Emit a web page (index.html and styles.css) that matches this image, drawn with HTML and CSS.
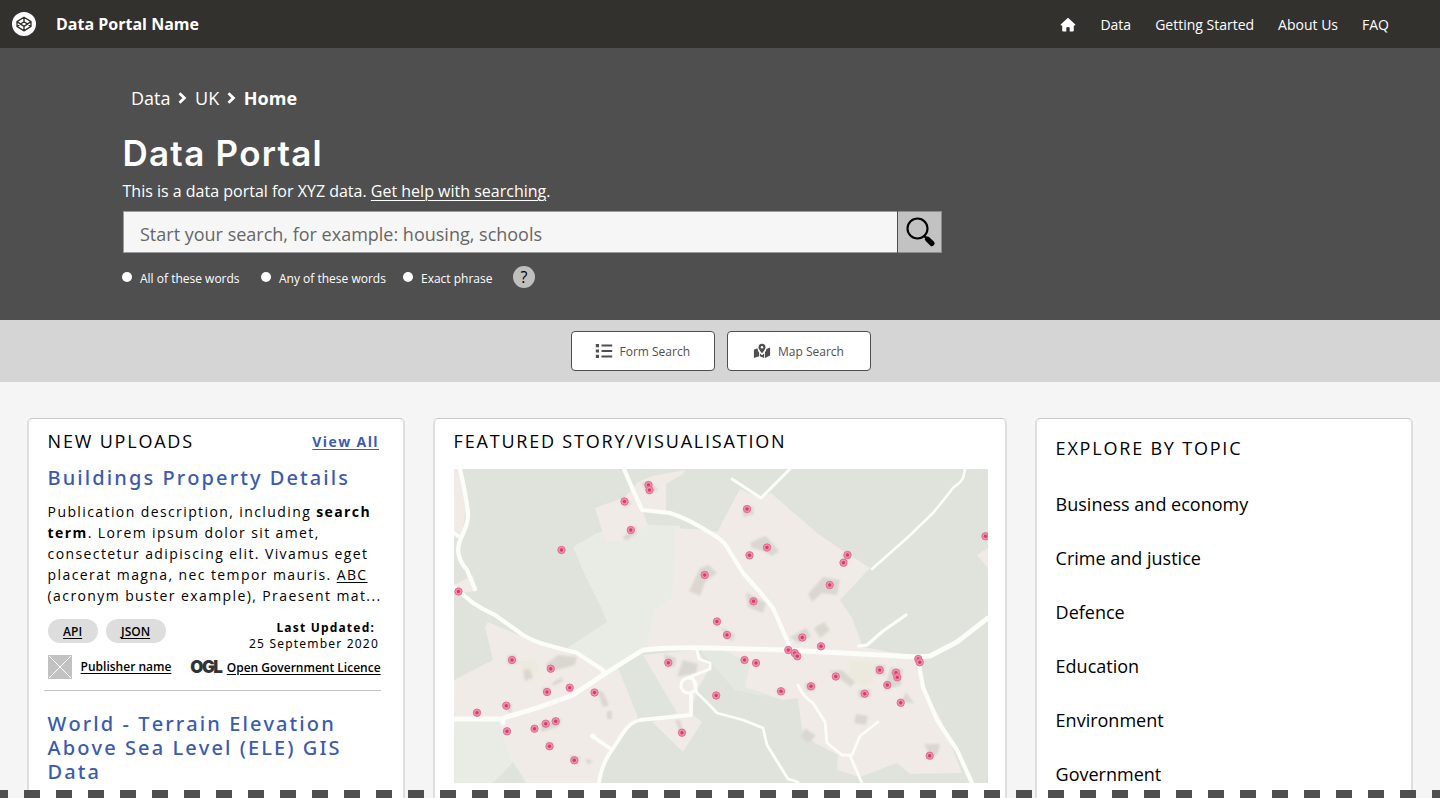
FILE: index.html
```html
<!DOCTYPE html>
<html lang="en">
<head>
<meta charset="utf-8">
<title>Data Portal</title>
<link rel="stylesheet" href="styles.css">
</head>
<body>
<header class="nav">
  <svg class="logo" viewBox="0 0 24 24"><circle cx="12" cy="12" r="12" fill="#fff"/><path d="M12 5.2 19 9.6V14.4L12 18.9 5 14.4V9.6ZM12 5.2V9.7M12 14.4V18.9M5 9.6 12 14.4 19 9.6M5 14.4 12 9.7 19 14.4" fill="none" stroke="#33312e" stroke-width="1.35" stroke-linejoin="round"/></svg>
  <span class="brand">Data Portal Name</span>
  <nav class="links">
    <svg class="home" viewBox="0 0 16 16"><path d="M8 .8 15.3 7.6Q15.5 8.6 14.6 8.6H13.8V13.6Q13.8 14.6 12.8 14.6H9.7V10.7Q9.7 9.9 8 9.9T6.3 10.7V14.6H3.2Q2.2 14.6 2.2 13.6V8.6H1.4Q.5 8.6.7 7.6Z" fill="#fff"/></svg>
    <a class="l1">Data</a><a class="l2">Getting Started</a><a class="l3">About Us</a><a class="l4">FAQ</a>
  </nav>
</header>
<section class="hero">
  <div class="crumbs"><span>Data</span><svg viewBox="0 0 9 12"><path d="M1.5 1.3 6.4 6 1.5 10.7"/></svg><span>UK</span><svg viewBox="0 0 9 12"><path d="M1.5 1.3 6.4 6 1.5 10.7"/></svg><b>Home</b></div>
  <h1>Data Portal</h1>
  <p class="intro">This is a data portal for XYZ data. <a>Get help with searching</a>.</p>
  <div class="search">
    <div class="field">Start your search, for example: housing, schools</div>
    <div class="go"><svg viewBox="0 0 44 41"><circle cx="19.5" cy="16.5" r="10" fill="none" stroke="#000" stroke-width="2.1"/><path d="M26 23.7 29 26.7" stroke="#000" stroke-width="2.4"/><path d="M29.5 27.2 34 31.5" stroke="#000" stroke-width="5.2" stroke-linecap="round"/></svg></div>
  </div>
  <div class="options">
    <i></i><span class="o1">All of these words</span><i></i><span class="o2">Any of these words</span><i></i><span class="o3">Exact phrase</span><span class="help">?</span>
  </div>
</section>
<section class="modes">
  <div class="mode"><svg viewBox="0 0 18 16"><path d="M.8 1h3.2v3.2H.8zM.8 6.4h3.2v3.2H.8zM.8 11.8h3.2V15H.8zM6.5 1.6h10.7v1.9H6.5zM6.5 7.1h10.7V9H6.5zM6.5 12.5h10.7v1.9H6.5z" fill="#4f4f4f"/></svg><span>Form Search</span></div>
  <div class="mode"><svg viewBox="0 0 18 16"><path d="M.9 6.8 4.4 5.2Q4.8 8 6.2 9.8V13.2L.9 15ZM7 10.6 9 12.3 11.2 10.4V15L7 13.3ZM12 9.3Q13.4 7 13.4 5.9L17.1 4.5V12.6L12 15Z" fill="#4f4f4f"/><path d="M9 .7A3.5 3.5 0 0 1 12.5 4.2Q12.4 6.4 9 10.2 5.6 6.4 5.5 4.2A3.5 3.5 0 0 1 9 .7Z" fill="#4f4f4f"/><circle cx="9" cy="4.2" r="1.2" fill="#fff"/></svg><span>Map Search</span></div>
</section>
<main class="cards">
  <section class="card uploads">
    <div class="head"><h2>NEW UPLOADS</h2><a class="all">View All</a></div>
    <h3>Buildings Property Details</h3>
    <p class="desc">Publication description, including <b>search term</b>. Lorem ipsum dolor sit amet, consectetur adipiscing elit. Vivamus eget placerat magna, nec tempor mauris. <a>ABC</a> (acronym buster example), Praesent mat...</p>
    <div class="meta">
      <span class="tag t1">API</span><span class="tag t2">JSON</span>
      <div class="date"><b>Last Updated:</b><span>25 September 2020</span></div>
    </div>
    <div class="source">
      <svg class="thumb" viewBox="0 0 24 24"><path fill="#c2c2c2" d="M0 0h24v24H0z"/><path d="M1 1 23 23M23 1 1 23" stroke="#fff" stroke-width="1"/></svg>
      <a class="pub">Publisher name</a><span class="ogl">OGL</span><a class="lic">Open Government Licence</a>
    </div>
    <h3 class="second">World - Terrain Elevation Above Sea Level (ELE) GIS Data</h3>
  </section>
  <section class="card story">
    <h2>FEATURED STORY/VISUALISATION</h2>
    <svg class="map" viewBox="454 469 534 314">
      <defs>
        <g id="pin"><circle r="3.7" fill="#f08fac" stroke="#e0668c" stroke-width=".9"/><circle r="1.7" fill="#cf3f6d"/></g>
        <filter id="soft" x="-5%" y="-5%" width="110%" height="110%"><feGaussianBlur stdDeviation=".9"/></filter>
      </defs>
      <path fill="#dfe3dc" d="M454 469h534v314H454z"/>
      <g fill="#e8ece5">
        <path d="M573 547 597 533 630 524 680 526 672 648 643 651 605 671 567 648 607 622 600 605 585 575Z"/>
        <path d="M454 718H498L512 757 530 783H454Z"/>
        <path d="M618 668 638 717 677 713 643 655Z" fill="#dfe4dd"/>
        <path d="M700 650 723 650 750 663 745 687 770 697 735 690Z" fill="#e4e8e1"/>
      </g>
      <path fill="#dee3db" d="M493 783 513 762 526 783Z"/>
      <g fill="#f0ebe6">
        <path d="M454 469H460L466 510 462 535 454 530ZM454 585 473 575 476 591 462 593ZM977 555 988 548V568Z"/>
        <path d="M595 508 625 497 638 482 652 476 685 470 683 474 666 484 666 512 643 512 648 525 625 540 606 543Z"/>
        <path d="M675 528 705 530 717 532 740 489 760 498 771 493 817 533 843 551 870 568 840 600 852 618 863 647 917 657 925 693 940 717 962 773 910 774 897 763 860 777 837 770 838 755 815 743 802 730 798 698 782 700 745 687 750 663 723 650 645 649 655 610 672 598Z"/>
        <path d="M488 622 485 627 493 660 454 680V720L498 722 510 757 528 783H598L613 750 638 717 618 668 600 668 580 657 523 637Z"/>
        <path d="M643 655 697 650 710 668 697 690 691 713 702 722 683 752 652 722 677 713Z"/>
      </g>
      <g fill="#ebeadb" opacity=".6" filter="url(#soft)"><path d="M848 660H874V683L862 688 848 677ZM518 662 534 658 539 672 524 680Z"/></g>
      <g fill="#dad7d1" filter="url(#soft)">
        <path d="M700 568 709 565 717 573 705 582 700 596 689 591 693 583ZM742 511 753 506 754 514 744 517ZM760 538 766 536 779 551 772 556 763 551 752 548 750 543ZM823 577 840 580 837 595 822 593 812 602 808 594ZM842 553 850 557 844 566ZM746 592 766 603 763 613 748 607ZM620 495 632 503 625 508ZM641 482 652 483 658 490 648 495ZM622 538 636 525 637 533 627 540Z"/>
        <path d="M814 628 824 622 830 630 820 638ZM790 637 806 628 811 637 798 643ZM545 665 558 655 577 657 575 665 553 671ZM523 670 530 669 533 678 525 681ZM507 656 515 654 518 663 508 665ZM552 683 562 677 563 681 553 686ZM541 688 550 687 550 695ZM597 690 603 692 609 705 603 707ZM607 711 612 711 612 719 607 719ZM585 758 593 761 588 765ZM664 654 676 658 675 666 666 668ZM683 660 698 664 696 673 677 677ZM720 627 735 634 732 642ZM829 671 842 670 855 682 851 687ZM858 690 870 689 871 697 859 698ZM875 665 885 665 885 675 875 675ZM891 667 903 669 901 685 884 690ZM906 692 914 703 901 702ZM856 714 868 716 866 725 854 723ZM924 744 940 744 938 753 931 758ZM805 728 816 736 808 743 801 737ZM775 689 787 690 781 696ZM805 683 816 683 815 691 806 691ZM501 704 512 704 511 714ZM540 723 561 718 560 726 541 732ZM545 741 554 743 553 751ZM569 755 580 757 578 766ZM675 720 680 720 684 734 680 732Z"/>
      </g>
      <g fill="none" stroke="#fcfdf9" stroke-width="4.2" stroke-linejoin="round" stroke-linecap="round">
        <path d="M460 469Q463 482 465 493T468 513 461 538 467 570L475 589M454 533 461 538"/>
        <path d="M454 587 473 603Q484 610 495 615L523 635Q535 642 547 645L577 653 603 670 603 676"/>
        <path d="M454 719H500L537 708 573 695 603 675 643 650Q670 647 710 648L787 650 917 657 930 656 957 642 988 618M503 719V723" stroke-width="4.8"/>
        <path d="M624 469 633 490 642 510 670 513Q685 518 697 525T717 537 730 552L743 573 760 592 773 608 790 647"/>
        <path d="M732 479 761 498 790 469" stroke-width="3"/>
        <path d="M965 469Q964 480 958 484T950 492L933 513 907 538 872 569" stroke-width="2.6"/>
        <path d="M906 615 883 631 867 645 859 646" stroke-width="3.2"/>
        <path d="M918 659 923 687 937 720 957 750 972 783"/>
        <path d="M798 685Q803 697 813 703L825 722 827 743 842 755 852 755 860 736 878 722M850 756 862 783" stroke-width="2.8"/>
        <path d="M697 650 699 659 710 663V669L687 678M692 676 697 693Q706 701 717 713L743 720 763 728 767 745 788 779 798 782" stroke-width="2.8"/>
        <circle cx="688.5" cy="685.5" r="7.6" stroke-width="3"/>
        <path d="M691 694V715L640 720Q630 722 623 733L612 750Q602 762 599 783M592 736 611 749" stroke-width="3.8"/>
      </g>
      <circle cx="593" cy="736" r="2.6" fill="#fcfdf9"/>
      <g class="pins">
        <use href="#pin" x="648.5" y="485"/><use href="#pin" x="649.5" y="490"/><use href="#pin" x="624.5" y="501.5"/><use href="#pin" x="630.8" y="530"/><use href="#pin" x="561.5" y="550"/><use href="#pin" x="458.5" y="591.5"/><use href="#pin" x="704.7" y="575"/>
        <use href="#pin" x="747" y="509"/><use href="#pin" x="767" y="547.5"/><use href="#pin" x="749.5" y="555.3"/><use href="#pin" x="847.5" y="555"/><use href="#pin" x="843.5" y="562.7"/><use href="#pin" x="829.7" y="585"/><use href="#pin" x="753.5" y="601.3"/><use href="#pin" x="985.5" y="536.3"/>
        <use href="#pin" x="717" y="621.5"/><use href="#pin" x="727" y="635"/><use href="#pin" x="668.3" y="662.7"/><use href="#pin" x="512" y="660"/><use href="#pin" x="550.7" y="668.7"/><use href="#pin" x="547" y="692"/><use href="#pin" x="569.7" y="687.7"/><use href="#pin" x="594.5" y="692.5"/><use href="#pin" x="506.3" y="705.7"/><use href="#pin" x="477" y="712.7"/><use href="#pin" x="507" y="731.3"/><use href="#pin" x="534.5" y="728.7"/><use href="#pin" x="545.7" y="723.7"/><use href="#pin" x="555.7" y="721.3"/><use href="#pin" x="549.5" y="746.3"/><use href="#pin" x="574.3" y="760.3"/><use href="#pin" x="682" y="732.7"/><use href="#pin" x="716.2" y="695.5"/>
        <use href="#pin" x="802.3" y="637.5"/><use href="#pin" x="821" y="646.3"/><use href="#pin" x="788.3" y="650"/><use href="#pin" x="794.7" y="653"/><use href="#pin" x="797.3" y="656.3"/><use href="#pin" x="744.5" y="660"/><use href="#pin" x="756" y="663"/><use href="#pin" x="781" y="691.3"/><use href="#pin" x="811" y="686.3"/><use href="#pin" x="835.8" y="676.5"/><use href="#pin" x="864.7" y="693.7"/><use href="#pin" x="879.7" y="670"/><use href="#pin" x="896" y="672.7"/><use href="#pin" x="897.3" y="677.3"/><use href="#pin" x="887.3" y="685"/><use href="#pin" x="900.7" y="702.7"/><use href="#pin" x="918.3" y="659"/><use href="#pin" x="919.7" y="662.3"/><use href="#pin" x="929.7" y="755.7"/>
      </g>
    </svg>
  </section>
  <section class="card topics">
    <h2>EXPLORE BY TOPIC</h2>
    <ul><li>Business and economy</li><li>Crime and justice</li><li>Defence</li><li>Education</li><li>Environment</li><li>Government</li></ul>
  </section>
</main>
<div class="dashes"></div>
</body>
</html>
```
FILE: styles.css
```css
* { box-sizing: border-box; }
body { margin: 0; height: 798px; overflow: hidden; position: relative; background: #f5f5f5; color: #000; font-family: "Open Sans", "Noto Sans", sans-serif; }
h1, h2, h3, p, ul { margin: 0; padding: 0; }
svg { display: block; flex: none; }
span, a { white-space: nowrap; }

.nav { height: 48px; background: #33312e; color: #fff; display: flex; align-items: center; padding: 0 51px 0 12px; }
.logo { width: 24px; height: 24px; }
.brand { margin-left: 20px; font-weight: 700; font-size: 16px; line-height: 24px; }
.links { margin-left: auto; display: flex; align-items: center; gap: 24px; font-size: 14px; line-height: 20px; padding-top: 1px; }
.home { width: 16px; height: 16px; }

.hero { height: 272px; background: #4f4f4f; color: #fff; padding: 38px 0 0 122.5px; }
.crumbs { display: flex; align-items: center; height: 24px; padding-left: 8.5px; font-size: 18px; line-height: 24px; }
.crumbs svg { width: 9px; height: 12px; margin: 0 7.8px; fill: none; stroke: #fff; stroke-width: 2.8; }
.hero h1 { margin-top: 23px; font: 600 35px/40px Inter, sans-serif; letter-spacing: 1.25px; }
.intro { margin-top: 6px; font-size: 16px; line-height: 24px; }
.intro a { text-decoration: underline; text-underline-offset: 3px; text-decoration-thickness: 1px; }
.search { display: flex; gap: 1px; margin-top: 8px; height: 42px; }
.field { width: 774.5px; background: #f6f6f6; border: 1px solid #9b9b9b; border-width: 1px 0 1px 1px; color: #666; font-size: 18px; line-height: 44px; padding-left: 16.5px; }
.go { width: 44px; background: #c2c2c2; border: 1px solid #8d8d8d; border-left: 0; }
.go svg { width: 44px; height: 41px; }
.options { display: flex; align-items: center; height: 24px; margin: 12px 0 0 -0.5px; font-size: 12px; line-height: 24px; }
.options i { width: 10px; height: 10px; border-radius: 50%; background: #fff; margin-right: 8px; }
.options > span { padding-top: 3px; }
.o1 { width: 121px; }
.o2 { width: 124px; }
.o3 { width: 92px; }
.options .help { width: 22px; height: 22px; padding: 0; border-radius: 50%; background: #bfbfbf; color: #000; font-size: 16px; line-height: 23px; text-align: center; }

.modes { height: 62px; background: #d5d5d5; display: flex; justify-content: center; gap: 12px; padding: 11px 0 0 2px; }
.mode { width: 144px; height: 40px; border: 1px solid #4f4f4f; border-radius: 4px; background: #fff; display: flex; align-items: center; padding-left: 22.5px; font-size: 12px; line-height: 20px; color: #4f4f4f; }
.mode span { padding-top: 2px; }
.mode + .mode { padding-left: 25px; }
.mode svg { width: 18px; height: 16px; margin-right: 7px; }

.cards { display: flex; gap: 28px; padding: 36px 27px 0; height: 416px; }
.card { background: #fff; border: 2px solid #dedede; border-top: 1px solid #c8c8c8; border-bottom: 0; border-radius: 5px 5px 0 0; overflow: hidden; padding: 9px 0 0 18.6px; flex: none; }
.uploads, .topics { width: 378px; }
.story { width: 574px; }
h2 { font-weight: 400; font-size: 18px; line-height: 26px; letter-spacing: 1.8px; white-space: nowrap; }
.head { display: flex; justify-content: space-between; padding-right: 24px; }
.all { color: #3c5bb0; font-weight: 700; font-size: 14px; line-height: 27px; letter-spacing: 1.4px; text-decoration: underline; text-underline-offset: 2px; text-decoration-thickness: 1px; }
h3 { color: #3c5bb0; font-family: "Noto Sans", sans-serif; font-weight: 500; font-size: 20px; line-height: 24px; letter-spacing: 2.08px; font-kerning: none; margin-top: 11px; }
.desc { margin-top: 11px; font-size: 14px; line-height: 21px; letter-spacing: 1.4px; margin-right: 15px; }
.desc a, .tag, .pub, .lic { text-decoration: underline; text-underline-offset: 2px; text-decoration-thickness: 1px; }
.meta { display: flex; height: 36px; margin-top: 13px; padding-right: 24px; }
.tag { height: 24px; border-radius: 12px; background: #ddd; font-weight: 600; font-size: 12px; line-height: 25px; text-align: center; margin-right: 8px; }
.t1 { width: 50px; }
.t2 { width: 60px; }
.date { margin-left: auto; text-align: right; font-family: "Noto Sans", sans-serif; font-size: 12px; line-height: 16px; letter-spacing: 1.2px; display: flex; flex-direction: column; padding-top: 1px; }
.date b { margin-right: 4px; }
.source { display: flex; align-items: flex-start; height: 36px; margin-left: -4px; padding-left: 4px; width: 337px; border-bottom: 1px solid #c4c4c4; font-weight: 600; font-size: 12px; line-height: 24px; }
.thumb { width: 24px; height: 24px; margin-right: 9px; }
.pub { width: 110px; }
.ogl { font: 900 17px/24px Inter, sans-serif; letter-spacing: -1.6px; width: 36.5px; color: #333; }
.lic { padding-top: 1px; }
.second { margin-top: 21px; width: 312px; }
.map { width: 534px; height: 314px; margin: 15px 0 0 0.4px; }
.topics h2 { margin-top: 7px; }
.topics ul { list-style: none; margin-top: 16px; }
.topics li { height: 54px; font-size: 18px; line-height: 54px; }

/* Page-continues marker laid over the cards */
.dashes { position: absolute; left: 0; right: 0; bottom: 0; height: 8px; background: repeating-linear-gradient(90deg, #4f4f4f 0 8px, transparent 8px 24px, #4f4f4f 24px 32px); }
```
